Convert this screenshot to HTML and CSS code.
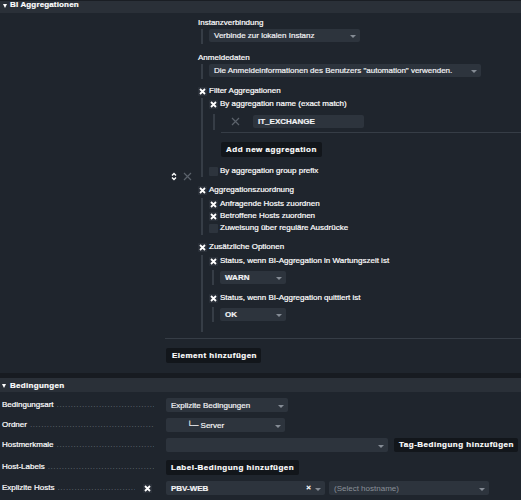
FILE: index.html
```html
<!DOCTYPE html>
<html>
<head>
<meta charset="utf-8">
<link rel="stylesheet" href="styles.css">
</head>
<body>
<div class="sec">
  <div class="sec-head"><span class="tri"></span>BI Aggregationen</div>
  <div class="sec-body">
    <div class="elem-row">
      <div class="elem-ctrl">
        <svg class="ico-ud" width="6" height="11" viewBox="0 0 6 11"><path d="M1 4.5L3 2.5L5 4.5M1 6.5L3 8.5L5 6.5" fill="none" stroke="#fff" stroke-width="1.4"/></svg>
        <svg class="ico-x" width="9" height="9" viewBox="0 0 9 9"><path d="M1 1L8 8M8 1L1 8" stroke="#5b626b" stroke-width="1.2"/></svg>
      </div>
      <div class="elem">
        <div class="title">Instanzverbindung</div>
        <div class="indent mt1">
          <div class="select w-inst"><span>Verbinde zur lokalen Instanz</span><span class="caret"></span></div>
        </div>
        <div class="title mt9">Anmeldedaten</div>
        <div class="indent mt1">
          <div class="select w-cred"><span>Die Anmeldeinformationen des Benutzers "automation" verwenden.</span><span class="caret"></span></div>
        </div>
        <div class="cbr mt7"><span class="cb on"><svg viewBox="0 0 9 9"><path d="M2 2L7 7M7 2L2 7" stroke="#fff" stroke-width="1.8"/></svg></span>Filter Aggregationen</div>
        <div class="indent mt2 pt1 pb1">
          <div class="cbr"><span class="cb on"><svg viewBox="0 0 9 9"><path d="M2 2L7 7M7 2L2 7" stroke="#fff" stroke-width="1.8"/></svg></span>By aggregation name (exact match)</div>
          <div class="listof">
            <div class="lrow">
              <svg class="ico-x lx" width="9" height="9" viewBox="0 0 9 9"><path d="M1 1L8 8M8 1L1 8" stroke="#5b626b" stroke-width="1.2"/></svg>
              <div class="input w-agg">IT_EXCHANGE</div>
            </div>
            <div class="hr hr-list"></div>
            <div class="btn btn-list">Add new aggregation</div>
          </div>
          <div class="cbr mt9"><span class="cb"></span>By aggregation group prefix</div>
        </div>
        <div class="cbr mt8"><span class="cb on"><svg viewBox="0 0 9 9"><path d="M2 2L7 7M7 2L2 7" stroke="#fff" stroke-width="1.8"/></svg></span>Aggregationszuordnung</div>
        <div class="indent mt3 pt1 pb2">
          <div class="cbr"><span class="cb on"><svg viewBox="0 0 9 9"><path d="M2 2L7 7M7 2L2 7" stroke="#fff" stroke-width="1.8"/></svg></span>Anfragende Hosts zuordnen</div>
          <div class="cbr mt2"><span class="cb on"><svg viewBox="0 0 9 9"><path d="M2 2L7 7M7 2L2 7" stroke="#fff" stroke-width="1.8"/></svg></span>Betroffene Hosts zuordnen</div>
          <div class="cbr mt2"><span class="cb"></span>Zuweisung über reguläre Ausdrücke</div>
        </div>
        <div class="cbr mt7"><span class="cb on"><svg viewBox="0 0 9 9"><path d="M2 2L7 7M7 2L2 7" stroke="#fff" stroke-width="1.8"/></svg></span>Zusätzliche Optionen</div>
        <div class="indent mt3 pt1 pb10">
          <div class="cbr"><span class="cb on"><svg viewBox="0 0 9 9"><path d="M2 2L7 7M7 2L2 7" stroke="#fff" stroke-width="1.8"/></svg></span>Status, wenn BI-Aggregation in Wartungszeit ist</div>
          <div class="indent sub mt4 pt1 pb1">
            <div class="select w-state"><span>WARN</span><span class="caret"></span></div>
          </div>
          <div class="cbr mt8"><span class="cb on"><svg viewBox="0 0 9 9"><path d="M2 2L7 7M7 2L2 7" stroke="#fff" stroke-width="1.8"/></svg></span>Status, wenn BI-Aggregation quittiert ist</div>
          <div class="indent sub mt4 pt1 pb1">
            <div class="select w-state"><span>OK</span><span class="caret"></span></div>
          </div>
        </div>
      </div>
    </div>
    <div class="hr hr-main"></div>
    <div class="btn btn-main">Element hinzufügen</div>
  </div>
</div>

<div class="sec sec2">
  <div class="sec-head head2"><span class="tri"></span>Bedingungen</div>
  <div class="sec2-body">
    <div class="frow">
      <div class="flabel"><span>Bedingungsart</span><span class="dots"></span></div>
      <div class="select w-cond"><span>Explizite Bedingungen</span><span class="caret"></span></div>
    </div>
    <div class="frow mt6">
      <div class="flabel"><span>Ordner</span><span class="dots"></span></div>
      <div class="select w-folder"><span class="folder">└─ Server</span><span class="caret"></span></div>
    </div>
    <div class="frow mt6">
      <div class="flabel"><span>Hostmerkmale</span><span class="dots"></span></div>
      <div class="select w-tags"><span></span><span class="caret"></span></div>
      <div class="btn btn-tag">Tag-Bedingung hinzufügen</div>
    </div>
    <div class="frow mt8">
      <div class="flabel"><span>Host-Labels</span><span class="dots"></span></div>
      <div class="btn">Label-Bedingung hinzufügen</div>
    </div>
    <div class="frow mt7">
      <div class="flabel with-cb"><span>Explizite Hosts</span><span class="dots"></span><span class="cb on lcb"><svg viewBox="0 0 9 9"><path d="M2 2L7 7M7 2L2 7" stroke="#fff" stroke-width="1.8"/></svg></span></div>
      <div class="select w-host"><span>PBV-WEB</span><span class="host-end"><span class="clear">×</span><span class="caret"></span></span></div>
      <div class="select w-sel"><span class="ph">(Select hostname)</span><span class="caret"></span></div>
    </div>
    <div class="frow mt2">
      <div class="flabel"></div>
      <span class="mini"></span>
    </div>
  </div>
</div>
</body>
</html>
```

FILE: styles.css
```css
* { box-sizing: border-box; }
html, body { margin: 0; padding: 0; }
body {
  background: #171b21;
  font-family: "Liberation Sans", Arial, "DejaVu Sans", sans-serif;
  font-size: 8px;
  color: #ffffff;
  width: 521px;
  height: 500px;
  overflow: hidden;
  -webkit-text-stroke: 0.2px currentColor;
}

.sec { background: #1f252d; }

.sec-head {
  display: flex;
  align-items: flex-start;
  background: #2a3038;
  font-weight: bold;
  letter-spacing: 0.15px;
  line-height: 10px;
  padding: 0 0 3px 0;
  box-shadow: inset 0 1px #1a1e24;
}
.tri {
  width: 0; height: 0;
  border-left: 2.5px solid transparent;
  border-right: 2.5px solid transparent;
  border-top: 4px solid #ffffff;
  margin: 4px 3px 0 3px;
}
.head2 { padding: 3px 0 1px 0; box-shadow: none; letter-spacing: 0.3px; }
.head2 .tri { margin-top: 3px; margin-left: 2px; margin-right: 4px; }

.sec-body {
  display: flex;
  flex-direction: column;
  padding: 5px 0 10px 166px;
}
.elem-row { display: flex; }
.elem-ctrl {
  width: 32px;
  flex: none;
  display: flex;
  align-items: center;
  padding-left: 5px;
  padding-top: 2px;
}
.ico-ud { display: block; }
.ico-x { display: block; margin-left: 6px; }
.elem { flex: 1; display: flex; flex-direction: column; }

.title { line-height: 10px; height: 10px; }

.indent {
  display: flex;
  flex-direction: column;
  margin-left: 3px;
  border-left: 2px solid #363d46;
  padding-left: 6px;
}
.indent.sub { padding-left: 6px; }

.mt1 { margin-top: 1px; }
.mt2 { margin-top: 2px; }
.mt3 { margin-top: 3px; }
.mt4 { margin-top: 4px; }
.mt6 { margin-top: 6px; }
.mt7 { margin-top: 7px; }
.mt8 { margin-top: 8px; }
.mt9 { margin-top: 9px; }
.pt1 { padding-top: 1px; }
.pb1 { padding-bottom: 1px; }
.pb2 { padding-bottom: 2px; }
.pb10 { padding-bottom: 10px; }
.indent.mt1 { padding-bottom: 2px; }

.select, .input {
  display: flex;
  align-items: center;
  justify-content: space-between;
  height: 13px;
  line-height: 13px;
  background: #2d343d;
  border-radius: 2px;
  padding-left: 5px;
  color: #f2f3f5;
  white-space: nowrap;
  flex: none;
}
.input { font-weight: bold; }
.caret {
  width: 0; height: 0;
  border-left: 3px solid transparent;
  border-right: 3px solid transparent;
  border-top: 3px solid #858c95;
  margin: 2px 4px 0 4px;
}
.w-inst { width: 151px; }
.w-cred { width: 272px; }
.w-state { width: 66px; font-weight: bold; }
.w-agg { width: 111px; }

.cbr {
  display: flex;
  align-items: center;
  height: 10px;
  line-height: 10px;
  white-space: nowrap;
}
.cb {
  width: 9px;
  height: 9px;
  flex: none;
  background: #2d343d;
  border-radius: 1px;
  margin-right: 2px;
  display: flex;
}
.cb svg { width: 9px; height: 9px; display: block; }
.cb.on { background: #2a3039; }

.listof {
  display: flex;
  flex-direction: column;
  margin-left: 4px;
  margin-top: 5px;
}
.lrow {
  display: flex;
  align-items: center;
  height: 16px;
  border-left: 2px solid #363d46;
  padding: 1px 0 2px 16px;
}
.lx { margin-left: 0; margin-right: 13px; }
.hr { height: 1px; background: #363d46; }
.hr-list { margin: 2px 0 0 8px; }
.btn {
  align-self: flex-start;
  flex: none;
  height: 15px;
  line-height: 15px;
  padding: 0 5px;
  background: #12161b;
  border-radius: 2px;
  font-weight: bold;
  letter-spacing: 0.5px;
  white-space: nowrap;
}
.btn-list { margin: 9px 0 0 8px; }
.hr-main { margin: 6px 0 0 -1px; }
.btn-main { margin-top: 9px; padding: 0 6px 0 6px; width: 95px; }

.sec2 { margin-top: 5px; }
.sec2-body {
  display: flex;
  flex-direction: column;
  padding-top: 6px;
  height: 130px;
}
.frow {
  display: flex;
  align-items: center;
  height: 14px;
  flex: none;
}
.flabel {
  width: 166px;
  flex: none;
  display: flex;
  align-items: center;
  padding: 0 12px 0 2px;
  line-height: 10px;
  white-space: nowrap;
  color: #ffffff;
}
.dots {
  flex: 1;
  overflow: hidden;
  color: #6a7079;
  margin-left: 3px;
  letter-spacing: 0.6px;
  -webkit-text-stroke: 0;
}
.dots::before {
  content: "..........................................................................";
}
.with-cb { padding-right: 14px; }
.lcb { margin: 0 0 0 8px; }
.select.w-cond { width: 122px; height: 14px; }
.select.w-folder { width: 119px; height: 14px; }
.folder { padding-left: 16px; }
.select.w-tags { width: 222px; height: 14px; }
.btn-tag { margin-left: 6px; height: 14px; line-height: 14px; padding: 0 4px 0 5px; }
.select.w-host { width: 159px; height: 14px; font-weight: bold; }
.host-end { display: flex; align-items: center; }
.clear { font-size: 8px; font-weight: bold; color: #ffffff; margin-right: 0; line-height: 8px; }
.select.w-sel { width: 160px; height: 14px; margin-left: 4px; }
.ph { color: #8a9098; -webkit-text-stroke: 0; }
.mini {
  width: 9px;
  height: 9px;
  background: #2d343d;
  border-radius: 1px;
  align-self: flex-end;
}
```
